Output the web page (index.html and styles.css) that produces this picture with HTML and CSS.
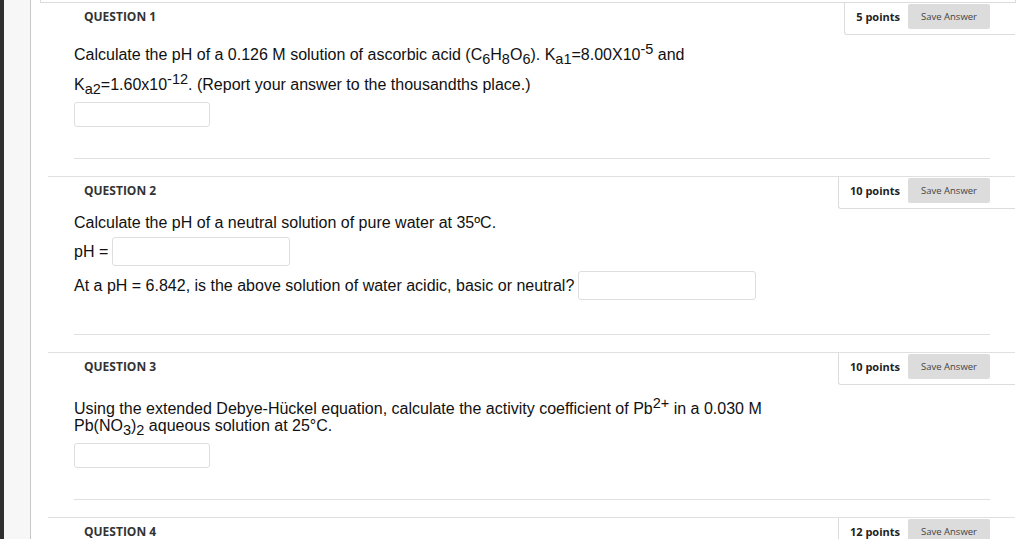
FILE: index.html
```html
<!DOCTYPE html>
<html>
<head>
<meta charset="utf-8">
<link rel="stylesheet" href="styles.css">
</head>
<body>
<div class="page">
  <div class="strip"></div>
  <div class="rail"></div>
  <div class="main">
    <div class="prev"></div>

    <div class="question q1">
      <div class="q-head">
        <h3 class="q-title">QUESTION 1</h3>
        <div class="points"><span class="pts">5 points</span><button class="save">Save Answer</button></div>
      </div>
      <div class="q-body">
        <p class="text tall first">Calculate the pH of a 0.126 M solution of ascorbic acid (C<sub>6</sub>H<sub>8</sub>O<sub>6</sub>). K<sub>a1</sub>=8.00X10<sup>-5</sup> and</p>
        <p class="text tall">K<sub>a2</sub>=1.60x10<sup>-12</sup>. (Report your answer to the thousandths place.)</p>
        <input class="answer small q1-input" type="text">
      </div>
    </div>

    <div class="question q2">
      <div class="q-head">
        <h3 class="q-title">QUESTION 2</h3>
        <div class="points"><span class="pts">10 points</span><button class="save">Save Answer</button></div>
      </div>
      <div class="q-body">
        <p class="text plain">Calculate the pH of a neutral solution of pure water at 35ºC.</p>
        <div class="row row-a"><span class="text">pH =</span><input class="answer wide" type="text"></div>
        <div class="row row-b"><span class="text">At a pH = 6.842, is the above solution of water acidic, basic or neutral?</span><input class="answer wide" type="text"></div>
      </div>
    </div>

    <div class="question q3">
      <div class="q-head">
        <h3 class="q-title">QUESTION 3</h3>
        <div class="points"><span class="pts">10 points</span><button class="save">Save Answer</button></div>
      </div>
      <div class="q-body">
        <p class="text tight">Using the extended Debye-Hückel equation, calculate the activity coefficient of Pb<sup>2+</sup> in a 0.030 M<br>Pb(NO<sub>3</sub>)<sub>2</sub> aqueous solution at 25°C.</p>
        <input class="answer small q3-input" type="text">
      </div>
    </div>

    <div class="question q4">
      <div class="q-head">
        <h3 class="q-title">QUESTION 4</h3>
        <div class="points"><span class="pts">12 points</span><button class="save">Save Answer</button></div>
      </div>
    </div>
  </div>
</div>
</body>
</html>
```
FILE: styles.css
```css
html, body {
  margin: 0;
  padding: 0;
  background: #fff;
}
.page {
  display: flex;
  width: 1024px;
  height: 539px;
  overflow: hidden;
}
.strip {
  width: 4px;
  flex: none;
  background: #2f2f2f;
}
.rail {
  width: 26px;
  flex: none;
  background: #f7f7f7;
  border-right: 1px solid #c8c8c8;
}
.main {
  margin-left: 9px;
  width: 976px;
  flex: none;
}
.prev {
  height: 2px;
  border: 1px solid #dcdcdc;
  border-top: none;
}
.question {
  margin-left: 8px;
  margin-right: 1px;
  border-top: 1px solid #e0e0e0;
}
.question.q1 {
  border-top: none;
}
.q-head {
  display: flex;
  justify-content: space-between;
  align-items: flex-start;
  height: 33px;
}
.q-title {
  margin: 0;
  padding: 6px 0 0 36px;
  font: bold 12px/16px "Open Sans", sans-serif;
  color: #333;
}
.points {
  display: flex;
  align-items: center;
  height: 32px;
  padding: 0 25px 4px 11px;
  box-sizing: border-box;
  border-left: 1px solid #dcdcdc;
  border-bottom: 1px solid #dcdcdc;
  border-bottom-left-radius: 3px;
  align-self: stretch;
}
.pts {
  font: bold 11px/14px "Open Sans", sans-serif;
  color: #222;
  margin-right: 8px;
}
.save {
  width: 82px;
  height: 25px;
  border: none;
  border-radius: 2px;
  background: #dcdcdc;
  color: #444;
  font: 9.5px/25px "Open Sans", sans-serif;
  padding: 0;
}
.q-body {
  margin-left: 26px;
  margin-right: 25px;
  border-bottom: 1px solid #e0e0e0;
  margin-bottom: 17px;
}
.text {
  font: 16px "Liberation Sans", Arial, sans-serif;
  color: #111;
  margin: 0;
}
sup, sub {
  font-size: 14.5px;
  line-height: 0;
}
sub {
  vertical-align: -4px;
}
sup {
  vertical-align: 6px;
}
.tall {
  line-height: 30px;
}
.tall.first {
  padding-top: 4px;
}
.plain {
  line-height: 18px;
  padding-top: 4px;
}
.tight {
  line-height: 17px;
  padding-top: 14px;
}
.answer {
  display: block;
  box-sizing: border-box;
  border: 1px solid #dedede;
  border-radius: 3px;
  background: #fff;
  margin: 0;
  padding: 0;
}
.answer.small {
  width: 136px;
  height: 25px;
}
.answer.wide {
  width: 178px;
  height: 29px;
  margin-left: 4px;
}
.q1-input {
  margin-top: 2px;
  margin-bottom: 31px;
}
.q3-input {
  margin-top: 9px;
  margin-bottom: 31px;
}
.row {
  display: flex;
  align-items: center;
}
.row .text {
  line-height: 18px;
}
.row-a {
  margin-top: 5px;
}
.row-b {
  margin-top: 5px;
  margin-bottom: 34px;
}
```
